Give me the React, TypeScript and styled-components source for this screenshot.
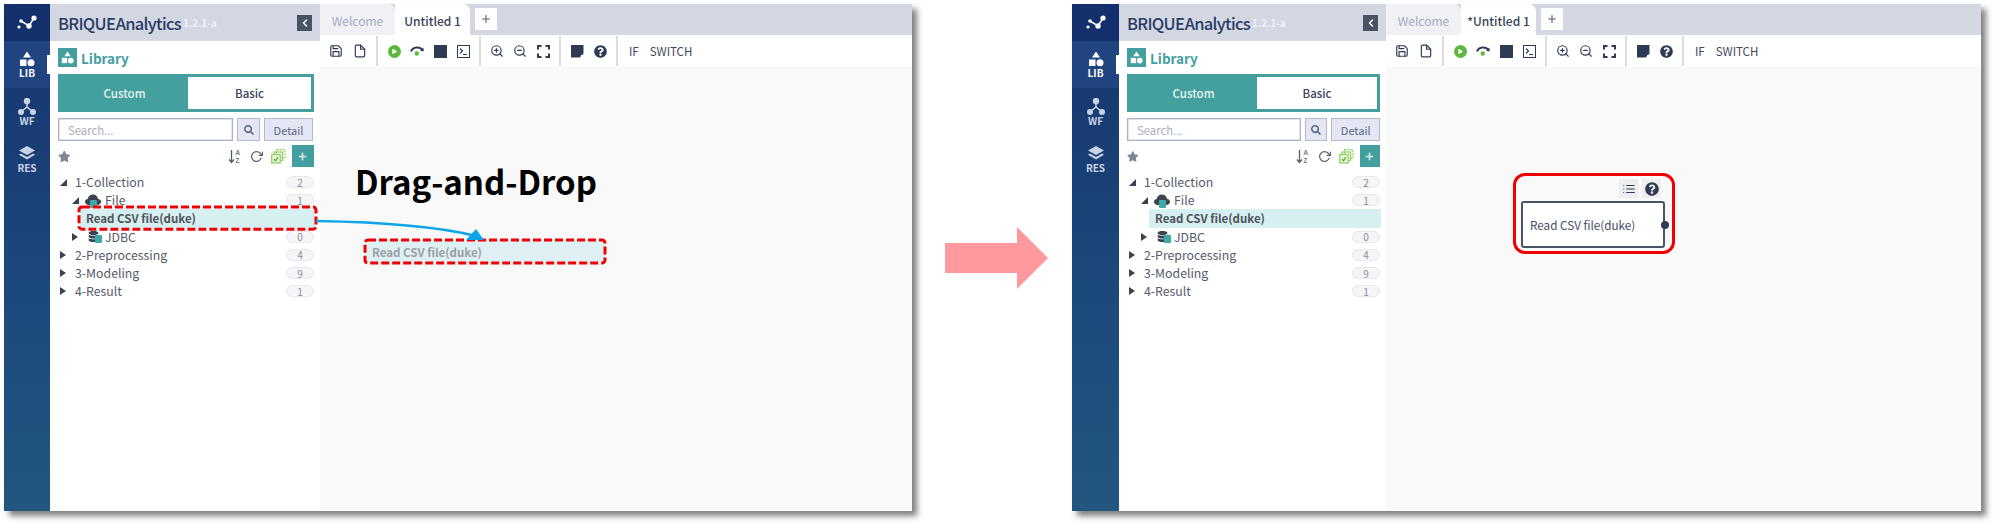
import React from 'react';
import styled, { createGlobalStyle } from 'styled-components';
import { FaStar, FaQuestionCircle, FaSearch, FaPlay, FaDatabase } from 'react-icons/fa';
import { FiSave, FiFile, FiZoomIn, FiZoomOut, FiRotateCw, FiPlus, FiChevronLeft, FiList } from 'react-icons/fi';

const GlobalStyle = createGlobalStyle`
	html, body {
		margin: 0;
		padding: 0;
		background: #fff;
		overflow: hidden;
	}
	* {
		box-sizing: border-box;
	}
	body {
		font-family: 'Noto Sans CJK KR', 'Noto Sans', sans-serif;
	}
`;

const Logo = () => (
	<svg width='22' height='16' viewBox='0 0 22 16' fill='none'>
		<path d='M5 6 L13 11 L18 3' stroke='#fff' strokeWidth='1.5' />
		<circle cx='3' cy='12' r='1.6' fill='#fff' />
		<circle cx='5' cy='6' r='1.8' fill='#fff' />
		<circle cx='13' cy='11' r='2.7' fill='#fff' />
		<circle cx='18' cy='3' r='2.6' fill='#fff' />
	</svg>
);

const ShapesIcon = ({ size = 16, color = '#fff' }: { size?: number; color?: string }) => (
	<svg width={size} height={size} viewBox='0 0 16 16' fill={color}>
		<path d='M8 0.5 L12 6.5 L4 6.5 Z' />
		<rect x='1' y='8.5' width='6.5' height='6.5' />
		<circle cx='12' cy='11.8' r='3.5' />
	</svg>
);

const NetworkIcon = () => (
	<svg width='18' height='17' viewBox='0 0 18 17' fill='none' stroke='#c9d2e4' strokeWidth='1.6'>
		<path d='M9 4 L9 9 L3 14 M9 9 L15 14' />
		<circle cx='9' cy='3' r='2.4' fill='#c9d2e4' />
		<circle cx='3' cy='14' r='2.2' fill='#c9d2e4' />
		<circle cx='15' cy='14' r='2.2' fill='#c9d2e4' />
	</svg>
);

const LayersIcon = () => (
	<svg width='18' height='17' viewBox='0 0 18 17' fill='#c9d2e4'>
		<path d='M9 1 L17 5.5 L9 10 L1 5.5 Z' />
		<path d='M2.8 8.6 L9 12 L15.2 8.6 L17 9.8 L9 14.5 L1 9.8 Z' />
	</svg>
);

const SortIcon = () => (
	<svg width='14' height='15' viewBox='0 0 14 15' fill='none'>
		<path d='M3.5 1 L3.5 13 M1 10.5 L3.5 13.5 L6 10.5' stroke='#555c6c' strokeWidth='1.3' />
		<text x='7.5' y='6' fontSize='6.5' fontWeight='700' fill='#7c8392' fontFamily='Noto Sans'>A</text>
		<text x='7.5' y='14' fontSize='6.5' fontWeight='700' fill='#7c8392' fontFamily='Noto Sans'>Z</text>
	</svg>
);

const CopyCheckIcon = () => (
	<svg width='15' height='15' viewBox='0 0 15 15' fill='none' stroke='#8ed05c' strokeWidth='1.2'>
		<rect x='5.5' y='0.7' width='8.5' height='8.5' strokeDasharray='2 1' />
		<rect x='3' y='3' width='8.5' height='8.5' />
		<rect x='0.7' y='5.5' width='8.5' height='8.5' fill='#e9f7dc' />
		<path d='M3 10 L4.6 11.8 L7 8' stroke='#4fa52f' />
	</svg>
);

const StepIcon = () => (
	<svg width='14' height='10' viewBox='0 0 14 10' fill='none'>
		<path d='M1 5.5 C3 0.5 10 0.5 12.5 4' stroke='#2f3b55' strokeWidth='2' />
		<path d='M10 5 L13.8 5.2 L13.4 1.5 Z' fill='#2f3b55' />
		<circle cx='6.8' cy='7.5' r='2.2' fill='#5cb83c' />
	</svg>
);

const TerminalIcon = () => (
	<svg width='13' height='13' viewBox='0 0 13 13' fill='none' stroke='#2f3b55'>
		<rect x='0.5' y='0.5' width='12' height='12' />
		<path d='M3 3.5 L5.5 6 L3 8.5 M6 9.5 L10 9.5' strokeWidth='1.1' />
	</svg>
);

const FullscreenIcon = () => (
	<svg width='13' height='13' viewBox='0 0 13 13' fill='none' stroke='#2f3b55' strokeWidth='2'>
		<path d='M1 4.5 V1 H4.5 M8.5 1 H12 V4.5 M12 8.5 V12 H8.5 M4.5 12 H1 V8.5' />
	</svg>
);

const NoteIcon = () => (
	<svg width='13' height='13' viewBox='0 0 13 13' fill='#2f3b55'>
		<path d='M0 0 H12.5 V8 L8 12.5 H0 Z' />
		<path d='M9 12.5 L9 9 L12.5 9' stroke='#2f3b55' fill='none' />
	</svg>
);

const CloudIcon = () => (
	<svg width='16' height='13' viewBox='0 0 16 13' fill='#3c4250'>
		<path d='M4 11 C1.5 11 0 9.5 0 7.7 C0 6 1.3 5 2.7 4.9 C3.2 2.3 5.2 0.6 7.9 0.6 C10.6 0.6 12.6 2.3 13.1 4.9 C14.7 5 16 6 16 7.7 C16 9.5 14.4 11 12 11 Z' />
	</svg>
);

const Stage = styled.main`
	display: flex;
	align-items: flex-start;
	width: 1993px;
	height: 524px;
	padding: 4px 0 0 4px;
`;

const Window = styled.section<{ $width: number }>`
	position: relative;
	display: flex;
	flex: none;
	width: ${(p) => p.$width}px;
	height: 507px;
	background: #fff;
	box-shadow: 5px 5px 6px rgba(0, 0, 0, 0.5);
`;

const Rail = styled.nav<{ $width: number }>`
	flex: none;
	width: ${(p) => p.$width}px;
	display: flex;
	flex-direction: column;
	background: linear-gradient(180deg, #15346f 0%, #1c4a7c 60%, #22567f 100%);
`;

const RailLogo = styled.div`
	height: 37px;
	display: flex;
	align-items: center;
	justify-content: center;
	background: #13306c;
`;

const RailItem = styled.div<{ $active?: boolean }>`
	position: relative;
	height: 47px;
	display: flex;
	flex-direction: column;
	align-items: center;
	justify-content: center;
	color: ${(p) => (p.$active ? '#fff' : '#c9d2e4')};
	background: ${(p) => (p.$active ? '#1f4480' : 'transparent')};
	font-size: 10px;
	font-weight: 700;
	line-height: 11px;

	${(p) =>
		p.$active &&
		`&::after {
			content: '';
			position: absolute;
			right: 0;
			top: 14px;
			width: 3px;
			height: 19px;
			background: #fff;
		}`}
`;

const Sidebar = styled.aside<{ $width: number }>`
	flex: none;
	width: ${(p) => p.$width}px;
	display: flex;
	flex-direction: column;
	background: #fff;
`;

const SideHeader = styled.header`
	height: 37px;
	display: flex;
	align-items: center;
	padding: 0 8px;
	background: #d3d7e2;
`;

const Brand = styled.span`
	font-size: 16.5px;
	font-weight: 500;
	letter-spacing: -0.7px;
	word-spacing: -2.5px;
	color: #2b3c68;
`;

const Version = styled.span`
	margin-left: 2px;
	font-size: 10px;
	font-weight: 700;
	color: #eef0f5;
`;

const Collapse = styled.button`
	margin-left: auto;
	width: 15px;
	height: 16px;
	padding: 0;
	border: 0;
	display: flex;
	align-items: center;
	justify-content: center;
	color: #fff;
	background: #4a5264;
`;

const SideBody = styled.div`
	padding: 7px 6px 0 8px;
	display: flex;
	flex-direction: column;
`;

const LibraryTitle = styled.h2`
	margin: 0;
	display: flex;
	align-items: center;
	gap: 4px;
	height: 19px;
	font-size: 13.5px;
	font-weight: 700;
	color: #44a09f;
`;

const LibraryBadge = styled.span`
	width: 19px;
	height: 19px;
	display: flex;
	align-items: center;
	justify-content: center;
	background: #44a09f;
`;

const Segments = styled.div`
	margin-top: 7px;
	height: 38px;
	display: grid;
	grid-template-columns: 127px 1fr;
	border: 3px solid #44a09f;
`;

const Segment = styled.div<{ $active?: boolean }>`
	display: flex;
	align-items: center;
	justify-content: center;
	font-size: 11.5px;
	font-weight: 500;
	color: ${(p) => (p.$active ? '#e8f5f4' : '#39415c')};
	background: ${(p) => (p.$active ? '#44a09f' : '#fff')};
`;

const SearchRow = styled.div`
	margin-top: 6px;
	display: flex;
	gap: 4px;
	height: 23px;
`;

const SearchInput = styled.div`
	width: 175px;
	display: flex;
	align-items: center;
	padding-left: 9px;
	font-size: 11.3px;
	color: #a9aebd;
	border: 1px solid #aab0c6;
	box-shadow: inset 0 0 0 0.5px #c6cad8;
`;

const GhostButton = styled.div<{ $width: number }>`
	width: ${(p) => p.$width}px;
	display: flex;
	align-items: center;
	justify-content: center;
	font-size: 11px;
	color: #5b6686;
	background: #e4e7f3;
	border: 1px solid #b4b9d0;
`;

const ActionRow = styled.div`
	margin-top: 4px;
	height: 22px;
	display: flex;
	align-items: center;
	color: #7f8696;
`;

const ActionIcon = styled.span<{ $start?: number }>`
	display: flex;
	margin-left: ${(p) => p.$start ?? 0}px;
	color: #60666f;
`;

const AddButton = styled.div`
	margin-left: 6px;
	width: 23px;
	height: 22px;
	display: flex;
	align-items: center;
	justify-content: center;
	color: #dff3f0;
	background: #44a09f;
`;

const Tree = styled.ul`
	list-style: none;
	margin: 6px 0 0;
	padding: 0;
`;

const TreeRow = styled.li<{ $indent: number }>`
	position: relative;
	height: 18.2px;
	display: flex;
	align-items: center;
	padding-left: ${(p) => p.$indent}px;
	font-size: 12.3px;
	color: #555a6a;
`;

const SelectedRow = styled.li`
	position: relative;
	height: 18.2px;
	margin: 0 -1px 0 22px;
	padding-left: 6px;
	display: flex;
	align-items: center;
	font-size: 11.5px;
	font-weight: 700;
	color: #50535c;
	background: #d6eff1;
`;

const DashedFrame = styled.svg<{ $inset: string }>`
	position: absolute;
	left: 0;
	top: 0;
	margin: ${(p) => p.$inset};
	width: calc(100% - 2 * ${(p) => p.$inset.split(' ')[1]});
	height: calc(100% - 2 * ${(p) => p.$inset.split(' ')[0]});
	overflow: visible;
	fill: none;
	stroke: #f00000;
	stroke-width: 3;
	stroke-dasharray: 8 3;
`;

const Caret = styled.span<{ $open?: boolean }>`
	flex: none;
	width: 0;
	height: 0;
	margin-right: 8px;
	border-style: solid;
	${(p) =>
		p.$open
			? `border-width: 0 0 7px 7px; border-color: transparent transparent #3b4150 transparent;`
			: `border-width: 4.5px 0 4.5px 6px; border-color: transparent transparent transparent #3b4150; margin-right: 9px;`}
`;

const NodeIcon = styled.span`
	position: relative;
	flex: none;
	display: flex;
	justify-content: center;
	width: 16px;
	margin: 0 4px 0 -2px;
	color: #3c4250;
`;

const NodeTag = styled.span<{ $side?: boolean }>`
	position: absolute;
	right: ${(p) => (p.$side ? -1 : 4)}px;
	bottom: -1px;
	width: 7px;
	height: 8px;
	border-radius: 1px;
	background: #3fa9a8;
`;

const Count = styled.span`
	margin-left: auto;
	width: 28px;
	height: 12px;
	display: flex;
	align-items: center;
	justify-content: center;
	font-size: 10px;
	color: #8a8f9c;
	background: #f5f5f7;
	border: 1px solid #e8e9ee;
	border-radius: 6px;
`;

const Main = styled.div`
	flex: 1;
	min-width: 0;
	display: flex;
	flex-direction: column;
`;

const TabBar = styled.div`
	height: 31px;
	display: flex;
	background: #d3d7e2;
`;

const Tab = styled.div<{ $active?: boolean }>`
	width: 75px;
	display: flex;
	align-items: center;
	justify-content: center;
	padding-top: 1px;
	font-size: 12px;
	font-weight: ${(p) => (p.$active ? 500 : 400)};
	color: ${(p) => (p.$active ? '#3a4258' : '#a3aabf')};
	background: ${(p) => (p.$active ? '#fff' : '#f0f1f5')};
	border-top-right-radius: 7px;
`;

const NewTab = styled.div`
	margin: 4px 0 5px 5px;
	width: 22px;
	display: flex;
	align-items: center;
	justify-content: center;
	color: #555c70;
	background: #fff;
`;

const Toolbar = styled.div`
	height: 32px;
	display: flex;
	align-items: center;
	background: #fff;
`;

const ToolGroup = styled.div<{ $gap: number; $last?: boolean }>`
	height: 30px;
	display: flex;
	align-items: center;
	gap: ${(p) => p.$gap}px;
	padding: 0 ${(p) => (p.$last ? 11 : 9)}px;
	color: #2f3b55;
	border-right: ${(p) => (p.$last ? 'none' : '2px solid #d9dbe0')};
`;

const ToolSlot = styled.span`
	width: 14px;
	display: flex;
	align-items: center;
	justify-content: center;
`;

const ToolText = styled.span`
	font-size: 11.5px;
	color: #3f4960;
`;

const PlayDot = styled.span`
	width: 13px;
	height: 13px;
	display: flex;
	align-items: center;
	justify-content: center;
	border-radius: 50%;
	color: #fff;
	background: #5cb83c;
`;

const StopSquare = styled.span`
	width: 13px;
	height: 13px;
	background: #2f3b55;
`;

const Canvas = styled.div`
	position: relative;
	flex: 1;
	background: #f9f9f9;
`;

const DragLabel = styled.div`
	position: absolute;
	left: 35px;
	top: 92px;
	font-size: 33px;
	font-weight: 700;
	line-height: 44px;
	color: #000;
`;

const GhostNode = styled.div`
	position: absolute;
	left: 45px;
	top: 173px;
	width: 240px;
	height: 23px;
	display: flex;
	align-items: center;
	padding-left: 7px;
	font-size: 11.5px;
	font-weight: 700;
	color: #9a9fa6;
	background: #dff0f4;
	border-radius: 4px;
`;

const DragArrow = styled.svg`
	position: absolute;
	left: 312px;
	top: 210px;
	pointer-events: none;
`;

const NodeFrame = styled.div`
	position: absolute;
	left: 127px;
	top: 106px;
	width: 162px;
	height: 81px;
	padding: 3px 7px 0 5px;
	display: flex;
	flex-direction: column;
	border: 3px solid #f00000;
	border-radius: 12px;
`;

const NodeTools = styled.div`
	display: flex;
	justify-content: flex-end;
	gap: 4px;
	padding-right: 4px;
`;

const NodeTool = styled.span`
	width: 19px;
	height: 19px;
	display: flex;
	align-items: center;
	justify-content: center;
	color: #2f3b55;
	background: #eee;
`;

const FlowNode = styled.div`
	position: relative;
	margin-top: 3px;
	height: 47px;
	display: flex;
	align-items: center;
	padding-left: 7px;
	font-size: 11.7px;
	color: #444e66;
	background: #fff;
	border: 2px solid #4a5468;
	border-radius: 3px;
`;

const Port = styled.span`
	position: absolute;
	right: -6px;
	top: 50%;
	width: 8px;
	height: 8px;
	margin-top: -4px;
	border-radius: 50%;
	background: #2f3b55;
`;

const BigArrow = styled.svg`
	flex: none;
	margin: 223px 24px 0 33px;
`;

type WindowProps = {
	width: number;
	railWidth: number;
	sideWidth: number;
	tabName: string;
	children?: React.ReactNode;
	overlay?: React.ReactNode;
	dashed?: boolean;
};

const groups = [
	{ name: '1-Collection', count: 2 },
	{ name: '2-Preprocessing', count: 4 },
	{ name: '3-Modeling', count: 9 },
	{ name: '4-Result', count: 1 },
];

const AppWindow = ({ width, railWidth, sideWidth, tabName, children, overlay, dashed }: WindowProps) => (
	<Window $width={width}>
		<Rail $width={railWidth}>
			<RailLogo>
				<Logo />
			</RailLogo>
			<RailItem $active>
				<ShapesIcon size={16} />
				<span>LIB</span>
			</RailItem>
			<RailItem>
				<NetworkIcon />
				<span>WF</span>
			</RailItem>
			<RailItem>
				<LayersIcon />
				<span>RES</span>
			</RailItem>
		</Rail>
		<Sidebar $width={sideWidth}>
			<SideHeader>
				<Brand>BRIQUE Analytics</Brand>
				<Version>1.2.1-a</Version>
				<Collapse>
					<FiChevronLeft size={12} strokeWidth={3} />
				</Collapse>
			</SideHeader>
			<SideBody>
				<LibraryTitle>
					<LibraryBadge>
						<ShapesIcon size={13} />
					</LibraryBadge>
					Library
				</LibraryTitle>
				<Segments>
					<Segment $active>Custom</Segment>
					<Segment>Basic</Segment>
				</Segments>
				<SearchRow>
					<SearchInput>Search...</SearchInput>
					<GhostButton $width={23}>
						<FaSearch size={10} />
					</GhostButton>
					<GhostButton $width={49}>Detail</GhostButton>
				</SearchRow>
				<ActionRow>
					<FaStar size={13} />
					<ActionIcon $start={157}>
						<SortIcon />
					</ActionIcon>
					<ActionIcon $start={8}>
						<FiRotateCw size={13} strokeWidth={2.4} />
					</ActionIcon>
					<ActionIcon $start={8}>
						<CopyCheckIcon />
					</ActionIcon>
					<AddButton>
						<FiPlus size={11} strokeWidth={3} />
					</AddButton>
				</ActionRow>
				<Tree>
					<TreeRow $indent={2}>
						<Caret $open />
						<span>{groups[0].name}</span>
						<Count>{groups[0].count}</Count>
					</TreeRow>
					<TreeRow $indent={14}>
						<Caret $open />
						<NodeIcon>
							<CloudIcon />
							<NodeTag />
						</NodeIcon>
						<span>File</span>
						<Count>1</Count>
					</TreeRow>
					<SelectedRow>
						Read CSV file(duke)
						{dashed && (
							<DashedFrame $inset='-2px -1px'>
								<rect width='100%' height='100%' rx='3' />
							</DashedFrame>
						)}
					</SelectedRow>
					<TreeRow $indent={14}>
						<Caret />
						<NodeIcon>
							<FaDatabase size={11} />
							<NodeTag $side />
						</NodeIcon>
						<span>JDBC</span>
						<Count>0</Count>
					</TreeRow>
					{groups.slice(1).map((g) => (
						<TreeRow $indent={2} key={g.name}>
							<Caret />
							<span>{g.name}</span>
							<Count>{g.count}</Count>
						</TreeRow>
					))}
				</Tree>
			</SideBody>
		</Sidebar>
		<Main>
			<TabBar>
				<Tab>Welcome</Tab>
				<Tab $active>{tabName}</Tab>
				<NewTab>
					<FiPlus size={12} strokeWidth={2.2} />
				</NewTab>
			</TabBar>
			<Toolbar>
				<ToolGroup $gap={10}>
					<ToolSlot>
						<FiSave size={14} />
					</ToolSlot>
					<ToolSlot>
						<FiFile size={14} />
					</ToolSlot>
				</ToolGroup>
				<ToolGroup $gap={9}>
					<ToolSlot>
						<PlayDot>
							<FaPlay size={5} />
						</PlayDot>
					</ToolSlot>
					<ToolSlot>
						<StepIcon />
					</ToolSlot>
					<ToolSlot>
						<StopSquare />
					</ToolSlot>
					<ToolSlot>
						<TerminalIcon />
					</ToolSlot>
				</ToolGroup>
				<ToolGroup $gap={9}>
					<ToolSlot>
						<FiZoomIn size={14} />
					</ToolSlot>
					<ToolSlot>
						<FiZoomOut size={14} />
					</ToolSlot>
					<ToolSlot>
						<FullscreenIcon />
					</ToolSlot>
				</ToolGroup>
				<ToolGroup $gap={9}>
					<ToolSlot>
						<NoteIcon />
					</ToolSlot>
					<ToolSlot>
						<FaQuestionCircle size={13} />
					</ToolSlot>
				</ToolGroup>
				<ToolGroup $gap={11} $last>
					<ToolText>IF</ToolText>
					<ToolText>SWITCH</ToolText>
				</ToolGroup>
			</Toolbar>
			<Canvas>{children}</Canvas>
		</Main>
		{overlay}
	</Window>
);

const App = () => (
	<>
		<GlobalStyle />
		<Stage>
			<AppWindow
				width={908}
				railWidth={46}
				sideWidth={270}
				tabName='Untitled 1'
				dashed
				overlay={
					<DragArrow width='180' height='36' viewBox='0 0 180 36'>
						<path d='M0 7 C60 8 120 12 160 22' stroke='#0ea5e6' strokeWidth='2.6' fill='none' />
						<path d='M168 26 L150 26 L160 15 Z' fill='#0ea5e6' />
					</DragArrow>
				}
			>
				<DragLabel>Drag-and-Drop</DragLabel>
				<GhostNode>
					Read CSV file(duke)
					<DashedFrame $inset='0px 0px'>
						<rect width='100%' height='100%' rx='3' />
					</DashedFrame>
				</GhostNode>
			</AppWindow>
			<BigArrow width='103' height='62' viewBox='0 0 103 62'>
				<path d='M0 16 L72 16 L72 0 L103 31 L72 62 L72 46 L0 46 Z' fill='#ff999d' />
			</BigArrow>
			<AppWindow width={909} railWidth={47} sideWidth={267} tabName='*Untitled 1'>
				<NodeFrame>
					<NodeTools>
						<NodeTool>
							<FiList size={14} />
						</NodeTool>
						<NodeTool>
							<FaQuestionCircle size={14} />
						</NodeTool>
					</NodeTools>
					<FlowNode>
						Read CSV file(duke)
						<Port />
					</FlowNode>
				</NodeFrame>
			</AppWindow>
		</Stage>
	</>
);

export default App;
